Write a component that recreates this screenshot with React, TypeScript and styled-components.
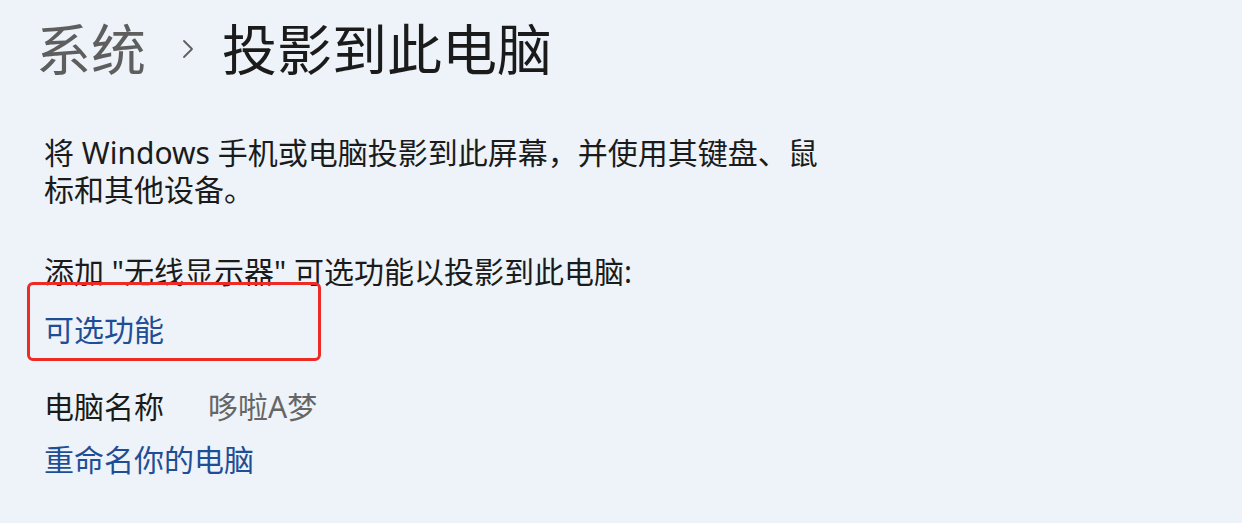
import styled, { createGlobalStyle } from "styled-components";

const GlobalStyle = createGlobalStyle`
  html, body {
    margin: 0;
    padding: 0;
    background: #edf3f8;
  }
  body {
    font-family: "Segoe UI", "Noto Sans", "Noto Sans CJK SC", sans-serif;
    color: #1b1b1b;
  }
`;

const Page = styled.div`
  position: relative;
  min-height: 523px;
  padding: 16px 0 0 44px;
  box-sizing: border-box;
`;

const Breadcrumb = styled.div`
  display: flex;
  align-items: center;
  height: 66px;
  margin-left: -8px;
`;

const Crumb = styled.span<{ $current?: boolean }>`
  font-size: 55px;
  line-height: 66px;
  color: ${(p) => (p.$current ? "#1b1b1b" : "#5e5e5e")};
`;

const Chevron = styled.svg`
  width: 12px;
  height: 20px;
  margin: 0 28px 0 36px;
`;

const Text = styled.p`
  margin: 0;
  font-size: 30px;
  line-height: 37px;
  color: #1b1b1b;
`;

const Description = styled(Text)`
  margin-top: 52px;
  max-width: 800px;
`;

const Prompt = styled(Text)`
  margin-top: 45px;
`;

const Link = styled.a`
  display: block;
  font-size: 30px;
  line-height: 37px;
  color: #1f4e96;
  text-decoration: none;
  cursor: pointer;
`;

const OptionalLink = styled(Link)`
  margin-top: 21px;
`;

const NameRow = styled.div`
  display: flex;
  gap: 44px;
  margin-top: 40px;
`;

const Value = styled(Text)`
  color: #666666;
`;

const RenameLink = styled(Link)`
  margin-top: 16px;
`;

const Highlight = styled.div`
  position: absolute;
  left: 27px;
  top: 282px;
  width: 294px;
  height: 79px;
  box-sizing: border-box;
  border: 3px solid #ec2b25;
  border-radius: 6px;
  pointer-events: none;
`;

export default function App() {
  return (
    <>
      <GlobalStyle />
      <Page>
        <Breadcrumb>
          <Crumb>系统</Crumb>
          <Chevron viewBox="0 0 12 20">
            <path d="M2 2 L10 10 L2 18" fill="none" stroke="#5e5e5e" strokeWidth="1.8" strokeLinecap="round" strokeLinejoin="round" />
          </Chevron>
          <Crumb $current>投影到此电脑</Crumb>
        </Breadcrumb>

        <Description>
          将 Windows 手机或电脑投影到此屏幕，并使用其键盘、鼠
          <br />
          标和其他设备。
        </Description>

        <Prompt>添加 "无线显示器" 可选功能以投影到此电脑:</Prompt>
        <OptionalLink>可选功能</OptionalLink>

        <NameRow>
          <Text>电脑名称</Text>
          <Value>哆啦A梦</Value>
        </NameRow>
        <RenameLink>重命名你的电脑</RenameLink>

        <Highlight />
      </Page>
    </>
  );
}
